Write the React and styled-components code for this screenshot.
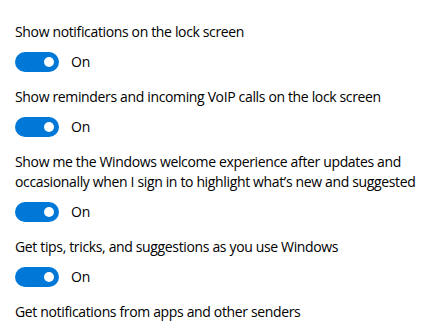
import React from 'react';
import styled, { createGlobalStyle } from 'styled-components';

const GlobalStyle = createGlobalStyle`
  html, body {
    margin: 0;
    padding: 0;
    background: #ffffff;
  }
  body {
    font-family: "Open Sans", "Noto Sans", "Liberation Sans", sans-serif;
    color: #000000;
    -webkit-font-smoothing: antialiased;
  }
`;

const Page = styled.div`
  width: 431px;
  height: 330px;
  overflow: hidden;
  padding: 22px 0 0 15px;
  box-sizing: border-box;
`;

const Setting = styled.div`
  display: flex;
  flex-direction: column;
  gap: 10px;
  margin-bottom: 15px;
`;

const Label = styled.div`
  font-size: 14px;
  line-height: 20px;
  letter-spacing: -0.35px;
  white-space: nowrap;
`;

const ToggleRow = styled.div`
  display: flex;
  align-items: center;
  gap: 12px;
  height: 20px;
  opacity: ${({ $fade }) => ($fade ? 0.12 : 1)};
`;

const Track = styled.div`
  position: relative;
  width: 44px;
  height: 20px;
  border-radius: 10px;
  background: #0078d7;
  flex-shrink: 0;
`;

const Knob = styled.span`
  position: absolute;
  top: 5px;
  right: 5px;
  width: 10px;
  height: 10px;
  border-radius: 50%;
  background: #ffffff;
`;

const State = styled.span`
  font-size: 14px;
  line-height: 20px;
  letter-spacing: -0.2px;
`;

const settings = [
  ['Show notifications on the lock screen'],
  ['Show reminders and incoming VoIP calls on the lock screen'],
  [
    'Show me the Windows welcome experience after updates and',
    'occasionally when I sign in to highlight what\u2019s new and suggested',
  ],
  ['Get tips, tricks, and suggestions as you use Windows'],
  ['Get notifications from apps and other senders'],
];

export default function App() {
  return (
    <>
      <GlobalStyle />
      <Page>
        {settings.map((lines, i) => (
          <Setting key={lines[0]}>
            <Label>
              {lines.map((line, j) => (
                <React.Fragment key={line}>
                  {j > 0 && <br />}
                  {line}
                </React.Fragment>
              ))}
            </Label>
            <ToggleRow $fade={i === settings.length - 1}>
              <Track>
                <Knob />
              </Track>
              <State>On</State>
            </ToggleRow>
          </Setting>
        ))}
      </Page>
    </>
  );
}
